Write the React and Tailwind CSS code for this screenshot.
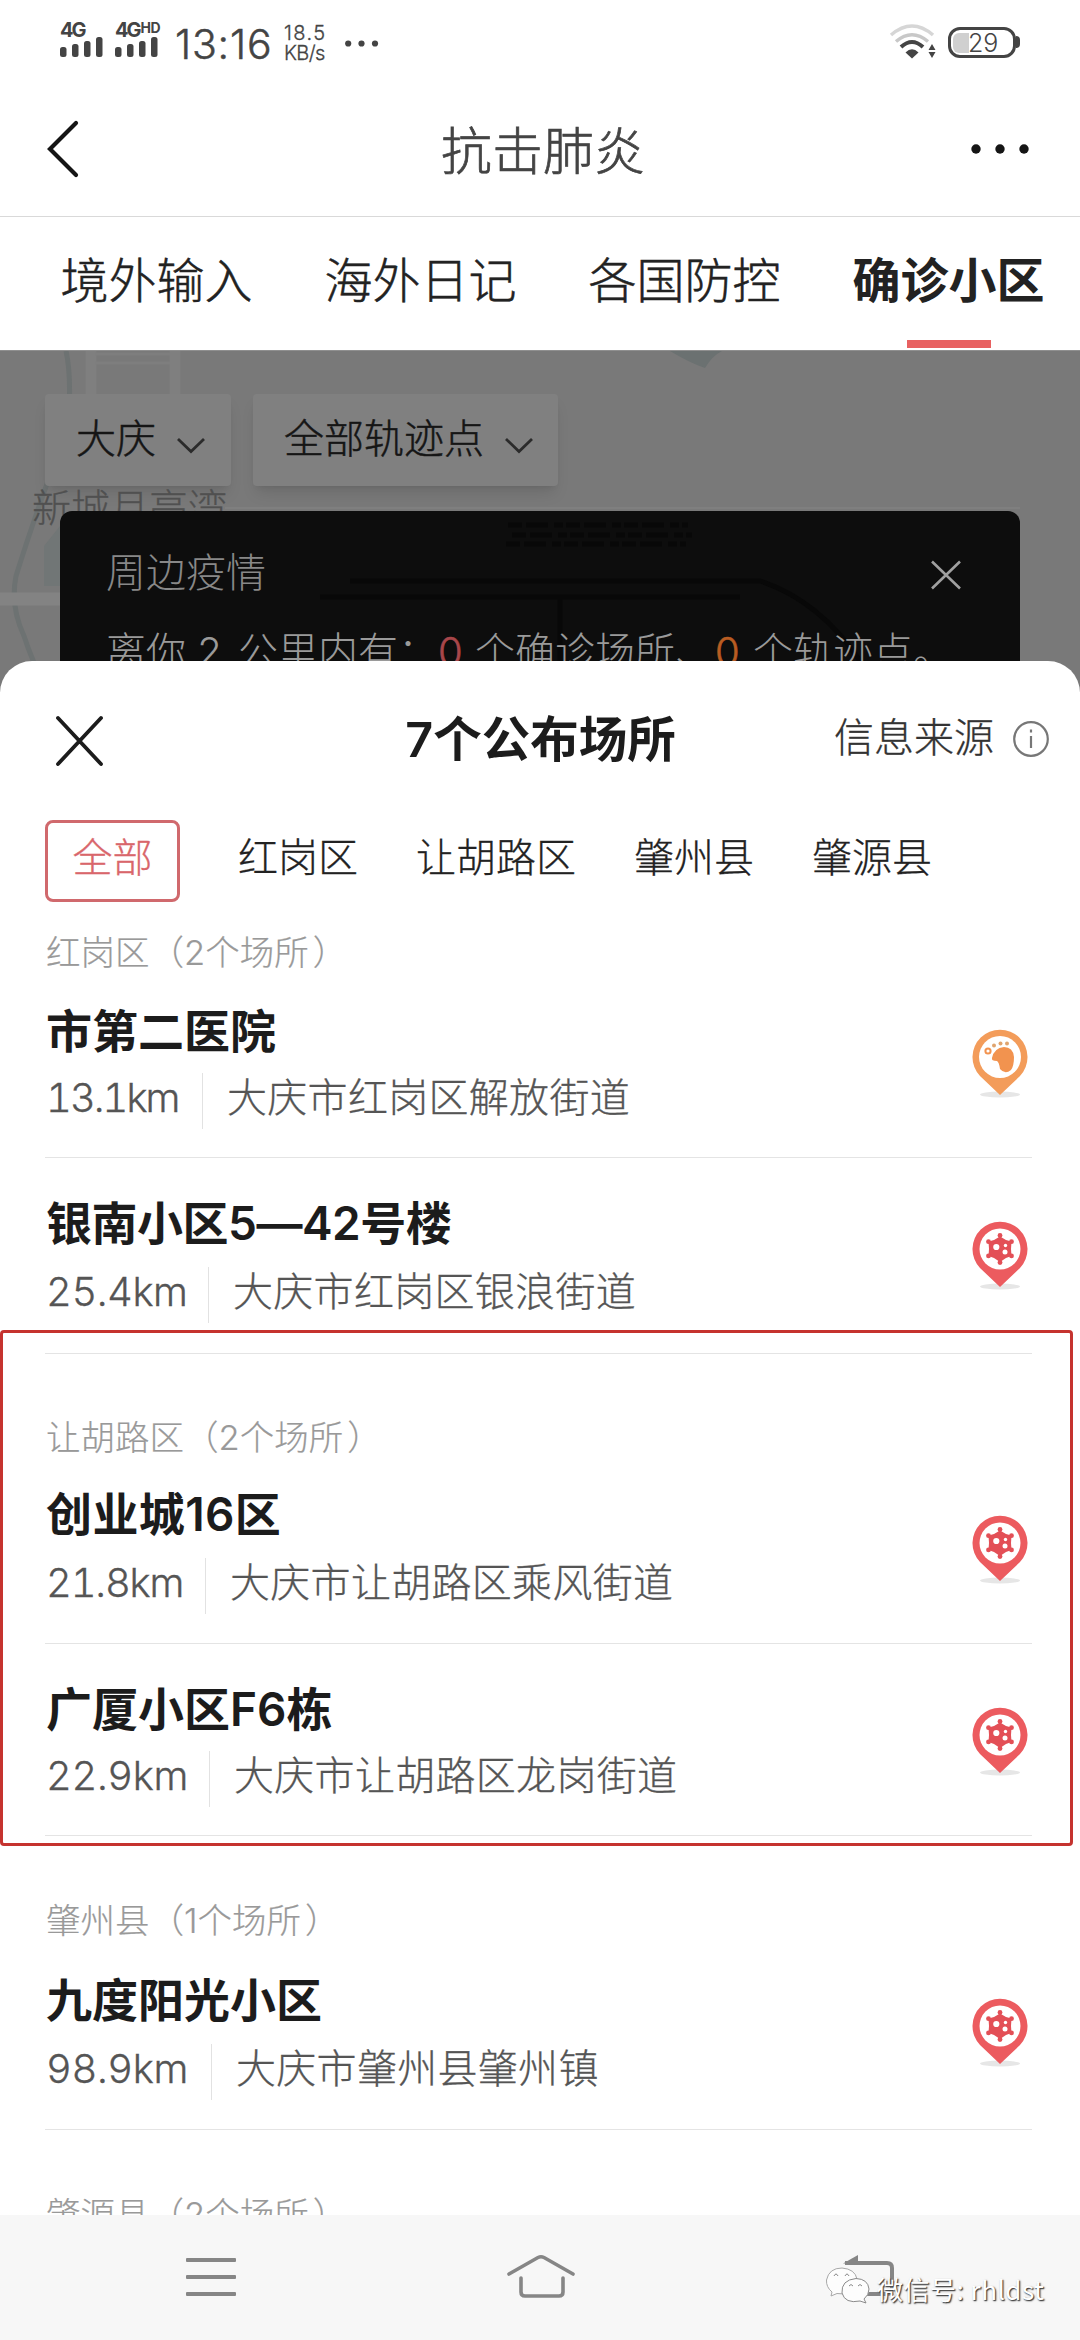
import React, { useState } from 'react';

const tabs = ['境外输入', '海外日记', '各国防控', '确诊小区'];
const districts = ['全部', '红岗区', '让胡路区', '肇州县', '肇源县'];

const groups = [
  {
    name: '红岗区',
    count: 2,
    head: 'mt-[31px]',
    places: [
      { name: '市第二医院', distance: '13.1km', address: '大庆市红岗区解放街道', type: 'track', title: 'mt-7', sub: 'mt-3 pb-7', dist: 'w-[156px] tracking-[-2px]' },
      { name: '银南小区5—42号楼', distance: '25.4km', address: '大庆市红岗区银浪街道', type: 'virus', title: 'mt-[35px] tracking-[-0.5px]', sub: 'mt-3.5 pb-[30px]', dist: 'w-[162px] tracking-[-0.5px]' },
    ],
  },
  {
    name: '让胡路区',
    count: 2,
    head: 'mt-16',
    places: [
      { name: '创业城16区', distance: '21.8km', address: '大庆市让胡路区乘风街道', type: 'virus', title: 'mt-[26px] tracking-[0.4px]', sub: 'mt-3.5 pb-[29px]', dist: 'w-[159px] tracking-[-1.2px]', pin: 'mt-[3px]' },
      { name: '广厦小区F6栋', distance: '22.9km', address: '大庆市让胡路区龙岗街道', type: 'virus', title: 'mt-[35px]', sub: 'mt-3 pb-7', dist: 'w-[163px] tracking-[-0.4px]' },
    ],
  },
  {
    name: '肇州县',
    count: 1,
    head: 'mt-[65px]',
    places: [
      { name: '九度阳光小区', distance: '98.9km', address: '大庆市肇州县肇州镇', type: 'virus', title: 'mt-[29px]', sub: 'mt-3.5 pb-[29px]', dist: 'w-[165px] tracking-[-0.4px]' },
    ],
  },
  { name: '肇源县', count: 2, head: 'mt-[65px]', places: [] },
];

const SignalBars = () => (
  <svg width="43" height="20" viewBox="0 0 43 20" fill="#444">
    <rect x="0" y="10" width="6.5" height="10" rx="2.5" />
    <rect x="12" y="7" width="6.5" height="13" rx="2.5" />
    <rect x="24" y="4" width="6.5" height="16" rx="2.5" />
    <rect x="36" y="0" width="6.5" height="20" rx="2.5" />
  </svg>
);

const StatusBar = () => (
  <div className="flex h-20 shrink-0 items-start justify-between px-[60px] text-[#444]">
    <div className="flex items-start">
      <div className="mt-[22px] w-[55px]">
        <div className="h-[15px] text-[20px] leading-4 font-bold tracking-[-2px]">4G</div>
        <SignalBars />
      </div>
      <div className="mt-[22px] w-[60px]">
        <div className="flex h-[15px] items-start text-[20px] leading-4 font-bold tracking-[-2px] whitespace-nowrap">
          4G<span className="ml-px text-[14px] leading-[11px] tracking-[-0.5px]">HD</span>
        </div>
        <SignalBars />
      </div>
      <div className="mt-[19px] w-[109px] text-[41px] leading-[50px] font-light tracking-[0.8px] [-webkit-text-stroke:0.5px]">13:16</div>
      <div className="mt-[23px] w-[61px] text-[20px] leading-5 font-light [-webkit-text-stroke:0.3px]">
        <div className="tracking-[1.4px]">18.5</div>
        <div className="tracking-[-0.6px]">KB/s</div>
      </div>
      <svg className="mt-10" width="34" height="7" viewBox="0 0 34 7" fill="#444">
        <circle cx="3.2" cy="3.5" r="3.1" />
        <circle cx="16.500" cy="3.5" r="3.1" />
        <circle cx="30" cy="3.5" r="3.1" />
      </svg>
    </div>
    <div className="flex items-start">
      <svg className="mt-[23px]" width="48" height="37" viewBox="0 0 48 37" fill="none">
        <path d="M2 12 Q23 -6 44 12" stroke="#d6d6d6" strokeWidth="3.5" />
        <path d="M7 18.500 Q23 5 39 18.500" stroke="#c8c8c8" strokeWidth="3.500" />
        <path d="M12 24 Q23 14 34 24" stroke="#444" strokeWidth="4" />
        <path d="M16.500 29.500 Q23 23 29.500 29.500 L23 35.500 Z" fill="#444" />
        <path d="M43 21 L46.500 27 H39.500 Z M43 35 L46.500 29 H39.500 Z" fill="#444" />
      </svg>
      <div className="mt-[27px] ml-[11px] flex h-[31px] w-[68px] items-center rounded-[12px] border-[3px] border-[#444] pl-0.5">
        <div className="h-5 w-4 rounded-l-[6px] bg-[#d0d0d0]" />
        <div className="ml-[-1px] text-[25px] leading-6 font-light">29</div>
      </div>
      <div className="mt-9 h-3 w-1 rounded-r bg-[#444]" />
    </div>
  </div>
);

const MapBackground = () => (
  <svg className="absolute inset-0" width="1080" height="342" viewBox="0 0 1080 342" fill="none">
    <rect width="1080" height="342" fill="#797979" />
    <path d="M66 0 Q71 22 69 60 L48 130 Q30 180 16 225 Q10 255 24 285 Q32 310 48 342" stroke="#6d7272" strokeWidth="5" />
    <path d="M44 195 L60 175 V235 H44 Z" fill="#717676" />
    <path d="M91 0 V46 M175 0 V46" stroke="#7f7f7f" strokeWidth="11" />
    <path d="M95 3 H170 M95 12 H170" stroke="#7e7e7e" strokeWidth="3" />
    <path d="M0 248 H60" stroke="#838383" strokeWidth="13" />
    <path d="M225 157 H1020" stroke="#828282" strokeWidth="1.500" />
    <path d="M670 0 H722 Q712 5 705 17 Q690 12 670 0 Z" fill="#6b7171" />
  </svg>
);

const Filter = ({ label, width }) => (
  <button className={`flex h-[92px] items-start rounded bg-[#808080] pl-[31px] text-[40px] leading-[90px] font-light shadow-lg [-webkit-text-stroke:0.5px] ${width}`}>
    <span>{label}</span>
    <svg className="mt-[43px] ml-[20px]" width="30" height="17" viewBox="0 0 30 17" fill="none" stroke="#2b2b2b" strokeWidth="2.800">
      <path d="M2 2 L15 14.500 L28 2" />
    </svg>
  </button>
);

const DimmedMap = () => (
  <div className="relative h-[342px] shrink-0 overflow-hidden border-t border-[#8f8f8f] text-[#151515]">
    <MapBackground />
    <div className="relative flex gap-[22px] pt-[43px] pl-[45px]">
      <Filter label="大庆" width="w-[186px]" />
      <Filter label="全部轨迹点" width="w-[305px]" />
    </div>
    <div className="absolute top-[133px] left-8 text-[39px] leading-[48px] font-light text-[#505050] [-webkit-text-stroke:0.3px]">新城月亮湾</div>
    <div className="relative mx-[60px] mt-[25px] h-[220px] rounded-xl bg-[#0d0d0d] px-[46px] pt-[37px] text-[40px] font-light text-[#9a9a9a]">
      <svg className="absolute inset-0" width="960" height="200" viewBox="0 0 960 200" fill="none" stroke="#080808" strokeWidth="5">
        <path d="M290 70 H700 Q760 90 800 150 M260 86 H680 M500 86 V150" />
        <path d="M448 14 H628 M452 24 H632 M446 33 H626" strokeWidth="5" strokeDasharray="14 4 22 6 9 3" />
      </svg>
      <div className="relative flex items-start justify-between">
        <div className="leading-[50px] text-[#888]">周边疫情</div>
        <svg className="mt-3 mr-3" width="32" height="30" viewBox="0 0 32 30" stroke="#a0a0a0" strokeWidth="2.600">
          <path d="M2 1.500 L30 28.500 M30 1.500 L2 28.500" />
        </svg>
      </div>
      <div className="relative mt-[29px] flex leading-[50px] whitespace-pre">
        <span className="w-[132px]">离你 2 </span>
        <span className="w-[200px]">公里内有：</span>
        <span className="w-[37px] text-[#a8464a] [-webkit-text-stroke:0.6px]">0</span>
        <span className="w-[240px]">个确诊场所、</span>
        <span className="w-[38px] text-[#b85c22] [-webkit-text-stroke:0.6px]">0</span>
        <span>个轨迹点。</span>
      </div>
    </div>
  </div>
);

const TrackPin = () => (
  <svg width="60" height="70" viewBox="0 0 60 70">
    <ellipse cx="30" cy="65.500" rx="20" ry="3" fill="#e6e6e6" />
    <path d="M30 66 L10 47 A27.500 27.500 0 1 1 50 47 Z" fill="#f39c5a" />
    <circle cx="30" cy="28" r="21" fill="#fff" />
    <path d="M22 29 Q24 19 34 18 Q43 18 44 28 Q44 37 41 41 Q35 46 30 40 Q29 33 27 32 Q21 32 22 29 Z" fill="#f2934f" />
    <circle cx="18" cy="22" r="2.600" fill="none" stroke="#f2934f" strokeWidth="2" />
    <circle cx="24" cy="16.500" r="2" fill="#e0a46e" />
    <circle cx="30.500" cy="14.500" r="2" fill="#e0a46e" />
    <circle cx="37" cy="14.500" r="2" fill="#e0a46e" />
  </svg>
);

const VirusPin = () => (
  <svg width="60" height="70" viewBox="0 0 60 70">
    <ellipse cx="30" cy="65.500" rx="20" ry="3" fill="#e6e6e6" />
    <path d="M30 66 L10 47 A27.500 27.500 0 1 1 50 47 Z" fill="#ec5b5f" />
    <circle cx="30" cy="28" r="20.500" fill="#fff" />
    <g fill="#e34f56">
      <path d="M30 15.500 L36 19 L41.500 20.500 L41 28 L41.500 35 L36 37 L30 41 L24 37 L18.500 35 L19 28 L18.500 20.500 L24 19 Z" />
      <circle cx="30" cy="14.500" r="2.400" />
      <circle cx="30" cy="41.500" r="2.400" />
      <circle cx="18.500" cy="20.700" r="2.400" />
      <circle cx="41.500" cy="20.700" r="2.400" />
      <circle cx="18.500" cy="34.900" r="2.400" />
      <circle cx="41.500" cy="34.900" r="2.400" />
    </g>
    <circle cx="26.300" cy="26" r="3.100" fill="#fff" />
    <circle cx="35.500" cy="24.500" r="1.700" fill="#fff" />
    <circle cx="35" cy="31" r="2.500" fill="#fff" />
  </svg>
);

const Place = ({ place }) => (
  <div className="flex justify-between border-b border-[#e4e4e4] pl-px">
    <div>
      <div className={`text-[46px] leading-[60px] font-semibold text-[#1c1c1c] ${place.title}`}>{place.name}</div>
      <div className={`flex text-[40px] leading-[50px] font-light text-[#555] [-webkit-text-stroke:0.3px] ${place.sub}`}>
        <div className={`tabular-nums ${place.dist}`}>{place.distance}</div>
        <div className="h-14 w-px bg-[#e2e2e2]" />
        <div className="ml-[24px] tracking-[0.3px]">{place.address}</div>
      </div>
    </div>
    <div className={`pt-[28px] pr-0.5 ${place.title}`}>
      <div className={place.pin}>{place.type === 'track' ? <TrackPin /> : <VirusPin />}</div>
    </div>
  </div>
);

const NavBar = () => (
  <div className="relative flex h-[125px] shrink-0 items-start bg-[#f7f7f7]">
    <svg className="mt-[43px] ml-[186px]" width="50" height="40" viewBox="0 0 50 40" fill="#868686">
      <rect width="50" height="4" y="0" rx="1" />
      <rect width="50" height="4" y="17" rx="1" />
      <rect width="50" height="4" y="34" rx="1" />
    </svg>
    <svg className="mt-[39px] ml-[269px]" width="72" height="48" viewBox="0 0 72 48" fill="none" stroke="#868686" strokeWidth="3.600" strokeLinecap="round">
      <path d="M4 20 L33 3.500 Q36 2 39 3.500 L68 20" />
      <path d="M16 24 V38 Q16 42 20 42 H54 Q58 42 58 38 V24" />
    </svg>
    <svg className="mt-[37px] ml-[264px]" width="56" height="48" viewBox="0 0 56 48" fill="none" stroke="#868686" strokeWidth="4">
      <path d="M4 11 H46 Q51 11 51 16 V37 Q51 42 46 42 H24" />
      <path d="M2 11.500 L17 3 V11.500 Z" fill="#868686" stroke="none" />
    </svg>
    <div className="absolute top-[52px] left-[825px] flex items-start">
      <svg width="46" height="42" viewBox="0 0 46 42" fill="#fdfdfd" stroke="#8a8a8a" strokeWidth="1">
        <path d="M7 25 Q1 20 1.500 13 Q4 1 17 1 Q30 2 32 12 L20 27 L12 26.500 L6 29 Z" stroke="#a8a8a8" />
        <path d="M31 11.500 Q43 12 44 22 Q44 28 39 32 L41 36 L35 34 Q20 37 17 26 Q16 13 31 11.500 Z" />
        <path d="M9 9 q2 -4 4 0 M20 9 q2 -4 4 0 M24 19 q2 -3 4 0 M33 19 q2 -3 4 0" fill="none" />
      </svg>
      <div className="mt-[7px] ml-1.5 font-['Noto_Sans_CJK_SC',sans-serif] text-[26px] leading-[30px] tracking-[0.5px] whitespace-pre text-white [text-shadow:1px_1px_1px_#444,1px_1px_2px_#777]">
        微信号: rhldst
      </div>
    </div>
  </div>
);

const App = () => {
  const [activeTab, setActiveTab] = useState('确诊小区');
  const [district, setDistrict] = useState('全部');

  return (
    <div className="relative flex h-[2340px] w-[1080px] flex-col overflow-hidden bg-white font-['Inter','Noto_Sans_CJK_SC',sans-serif]">
      <StatusBar />

      <div className="grid h-[137px] shrink-0 grid-cols-[1fr_auto_1fr] items-start border-b border-[#d9d9d9] pr-[51px] pl-[47px]">
        <svg className="mt-10" width="34" height="58" viewBox="0 0 34 58" fill="none" stroke="#151515" strokeWidth="4.200" strokeLinecap="round">
          <path d="M29 3 L3 29 L29 55" />
        </svg>
        <h1 className="mt-10 ml-2.5 text-[51px] leading-[64px] font-light text-[#444] [-webkit-text-stroke:0.7px]">抗击肺炎</h1>
        <svg className="mt-[63px] justify-self-end" width="58" height="12" viewBox="0 0 58 12" fill="#151515">
          <circle cx="5" cy="6" r="4.700" />
          <circle cx="29" cy="6" r="4.700" />
          <circle cx="53" cy="6" r="4.700" />
        </svg>
      </div>

      <div className="flex h-[133px] shrink-0 items-start gap-[72px] pl-[60.5px] text-[48px] leading-[60px] text-[#222]">
        {tabs.map((tab) => (
          <button key={tab} onClick={() => setActiveTab(tab)} className="flex shrink-0 flex-col items-center pt-[34px]">
            <span className={activeTab === tab ? 'font-bold' : 'font-light [-webkit-text-stroke:0.5px]'}>{tab}</span>
            {activeTab === tab && <span className="mt-[29px] h-2 w-[84px] bg-[#e86161]" />}
          </button>
        ))}
      </div>

      <DimmedMap />

      <div className="relative -mt-[31px] flex h-[1554px] shrink-0 flex-col overflow-hidden rounded-t-[32px] bg-white">
        <div className="grid h-[159px] shrink-0 grid-cols-[1fr_auto_1fr] items-start pr-[30px] pl-[55px]">
          <svg className="mt-[54px]" width="50" height="52" viewBox="0 0 50 52" stroke="#1c1c1c" strokeWidth="3.800" strokeLinecap="round">
            <path d="M3 3 L46 49 M46 3 L3 49" />
          </svg>
          <h2 className="mt-[47px] mr-6 text-[48.5px] leading-[64px] font-semibold text-[#1c1c1c]">7个公布场所</h2>
          <div className="mt-[51px] flex justify-self-end text-[40px] leading-[52px] font-light text-[#333] [-webkit-text-stroke:0.3px]">
            信息来源
            <svg className="mt-2 ml-[18px]" width="38" height="38" viewBox="0 0 38 38" fill="none" stroke="#777" strokeWidth="2.200">
              <circle cx="19" cy="19" r="16.800" />
              <path d="M19 16 V28 M19 9.500 V12.500" />
            </svg>
          </div>
        </div>

        <div className="flex h-[82px] shrink-0 items-start gap-[58px] pl-[45px] text-[40px] leading-[50px] font-light text-[#222] [-webkit-text-stroke:0.3px]">
          {districts.map((item) => (
            <button
              key={item}
              onClick={() => setDistrict(item)}
              className={
                district === item
                  ? 'flex h-[82px] w-[135px] shrink-0 justify-center rounded-lg border-[3px] border-[#d0696d] pt-[10px] text-[#d9666b]'
                  : 'pt-[13px]'
              }
            >
              {item}
            </button>
          ))}
        </div>

        <div className="pr-[48px] pl-[45px]">
          {groups.map((group) => (
            <div key={group.name}>
              <div className={`pl-px text-[34.5px] leading-10 font-light text-[#999] [-webkit-text-stroke:0.2px] ${group.head}`}>
                {group.name}（{group.count}个场所<span className="ml-1">）</span>
              </div>
              {group.places.map((place) => (
                <Place key={place.name} place={place} />
              ))}
            </div>
          ))}
        </div>
      </div>

      <NavBar />

      {/* marked area around 让胡路区 */}
      <div className="pointer-events-none absolute top-[1330px] left-0 h-[516px] w-[1073px] rounded-sm border-[3px] border-[#c5332f]" />
    </div>
  );
};

export default App;
